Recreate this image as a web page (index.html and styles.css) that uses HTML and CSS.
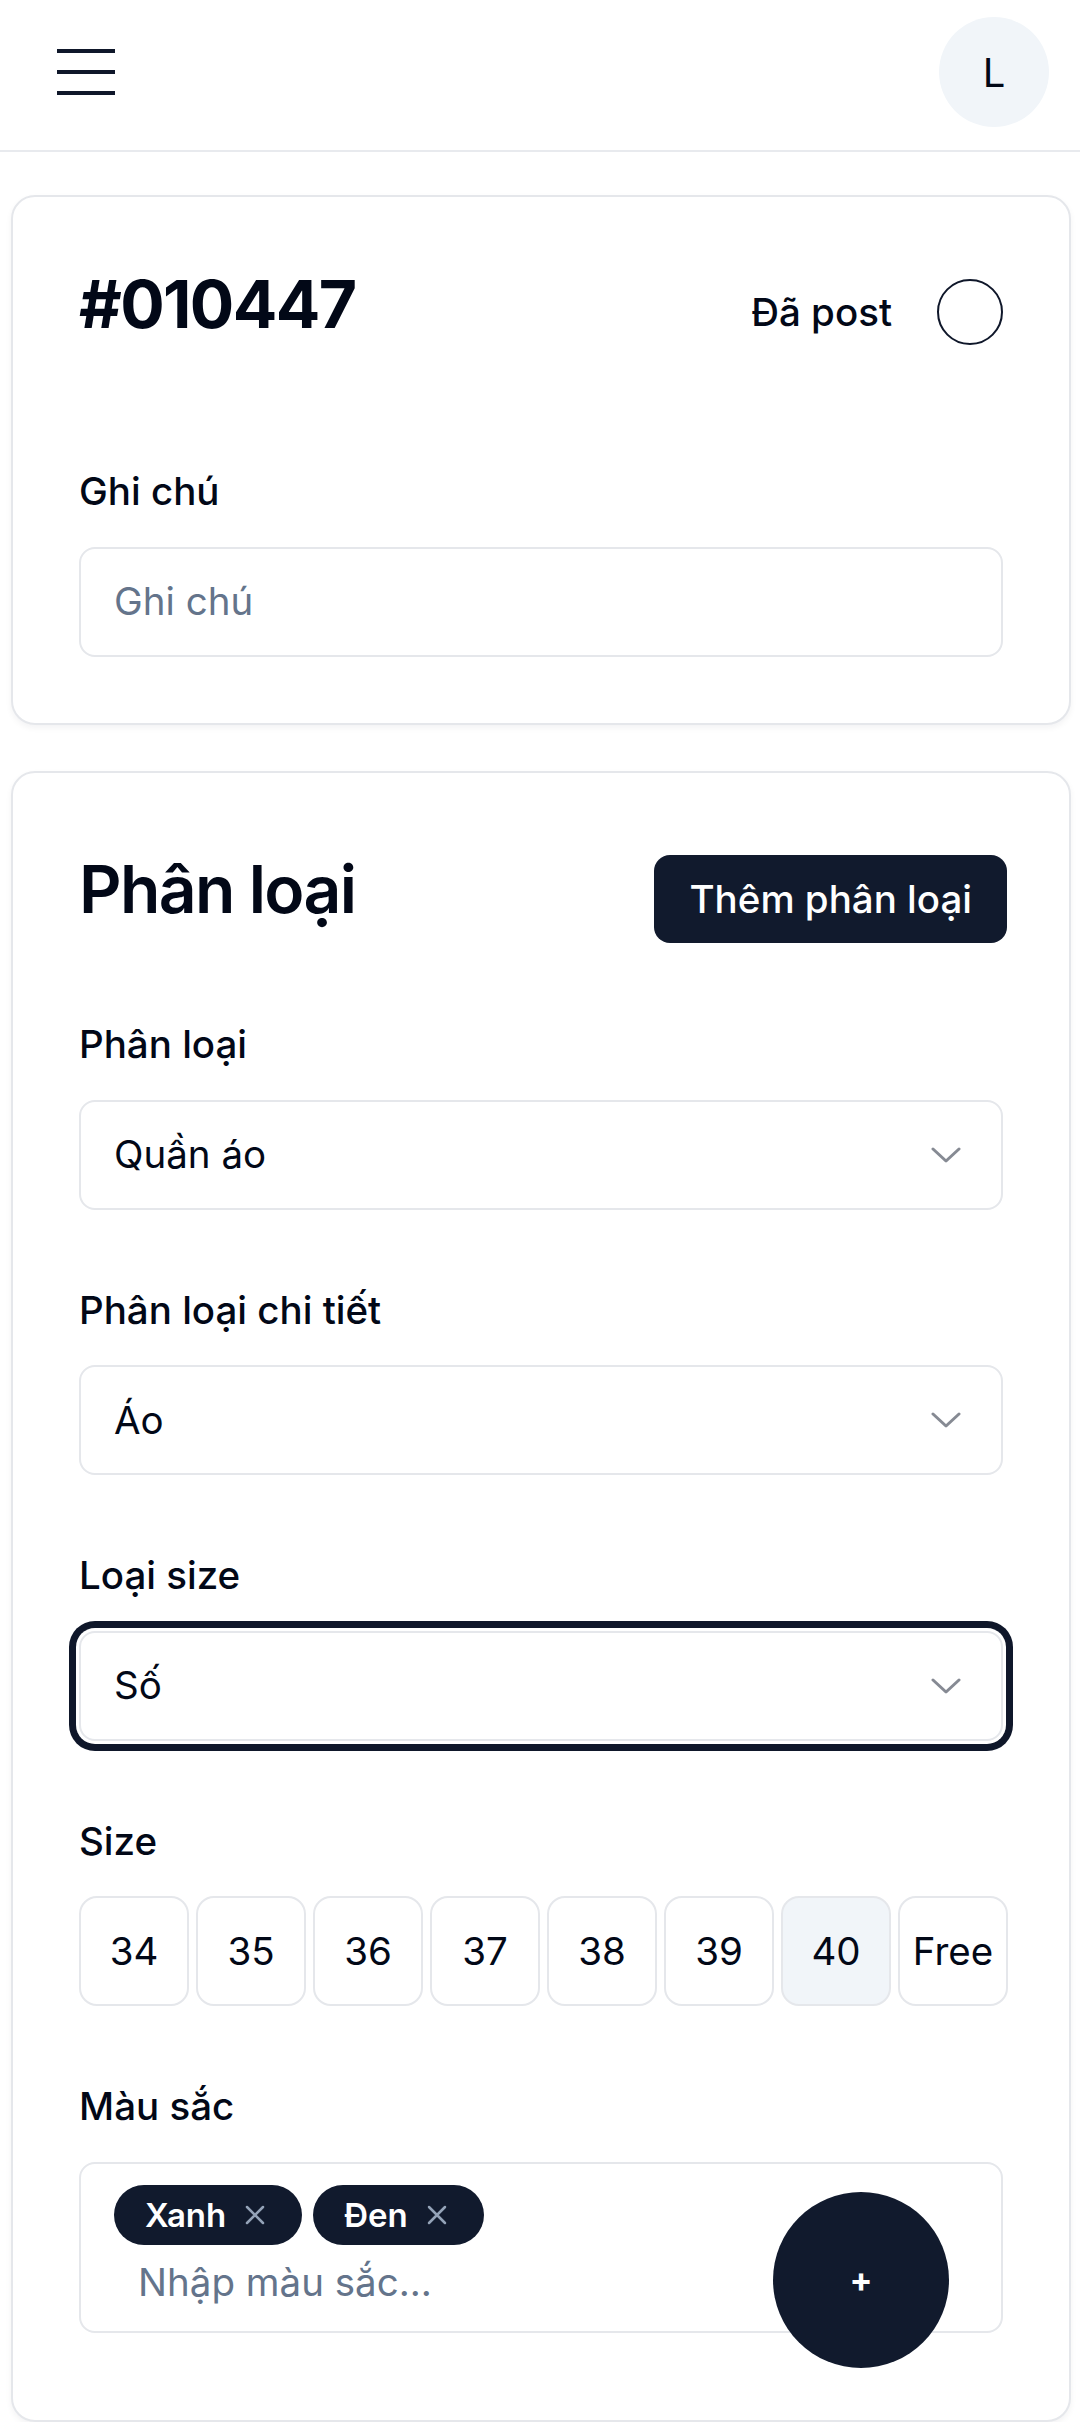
FILE: index.html
```html
<!DOCTYPE html>
<html lang="vi">
<head>
<meta charset="utf-8">
<title>Đơn hàng #010447</title>
<link rel="stylesheet" href="styles.css">
</head>
<body>
<header class="topbar">
  <button class="menu-btn" aria-label="Menu">
    <svg width="58" height="46" viewBox="0 0 58 46"><path d="M0 2H58M0 23H58M0 44H58" stroke="#0f172a" stroke-width="4"/></svg>
  </button>
  <div class="avatar">L</div>
</header>
<main class="page">
  <section class="card">
    <div class="order-head">
      <h1 class="order-id">#010447</h1>
      <div class="posted"><span>Đã post</span><span class="radio"></span></div>
    </div>
    <div class="field field-first">
      <div class="label">Ghi chú</div>
      <div class="input"><span class="placeholder">Ghi chú</span></div>
    </div>
  </section>

  <section class="card card-second">
    <div class="section-head">
      <h2 class="section-title">Phân loại</h2>
      <button class="btn-primary">Thêm phân loại</button>
    </div>

    <div class="field field-top">
      <div class="label">Phân loại</div>
      <div class="input select"><span>Quần áo</span>
        <svg class="chev" width="30" height="16" viewBox="0 0 30 16"><path d="M2 2L15 14L28 2" fill="none" stroke="#0f172a" stroke-width="3" stroke-linecap="round" stroke-linejoin="round"/></svg>
      </div>
    </div>

    <div class="field">
      <div class="label">Phân loại chi tiết</div>
      <div class="input select"><span>Áo</span>
        <svg class="chev" width="30" height="16" viewBox="0 0 30 16"><path d="M2 2L15 14L28 2" fill="none" stroke="#0f172a" stroke-width="3" stroke-linecap="round" stroke-linejoin="round"/></svg>
      </div>
    </div>

    <div class="field">
      <div class="label">Loại size</div>
      <div class="input select focused"><span>Số</span>
        <svg class="chev" width="30" height="16" viewBox="0 0 30 16"><path d="M2 2L15 14L28 2" fill="none" stroke="#0f172a" stroke-width="3" stroke-linecap="round" stroke-linejoin="round"/></svg>
      </div>
    </div>

    <div class="field">
      <div class="label">Size</div>
      <div class="sizes">
        <div class="size">34</div>
        <div class="size">35</div>
        <div class="size">36</div>
        <div class="size">37</div>
        <div class="size">38</div>
        <div class="size">39</div>
        <div class="size active">40</div>
        <div class="size">Free</div>
      </div>
    </div>

    <div class="field">
      <div class="label">Màu sắc</div>
      <div class="tagbox">
        <div class="chips">
          <span class="chip">Xanh<svg width="22" height="22" viewBox="0 0 22 22"><path d="M3 3L19 19M19 3L3 19" stroke="#94a3b8" stroke-width="2.5" stroke-linecap="round"/></svg></span>
          <span class="chip">Đen<svg width="22" height="22" viewBox="0 0 22 22"><path d="M3 3L19 19M19 3L3 19" stroke="#94a3b8" stroke-width="2.5" stroke-linecap="round"/></svg></span>
        </div>
        <div class="tag-placeholder">Nhập màu sắc...</div>
        <button class="fab" aria-label="Thêm">+</button>
      </div>
    </div>
  </section>
</main>
</body>
</html>
```

FILE: styles.css
```css
* { box-sizing: border-box; }

html, body {
  margin: 0;
  padding: 0;
  background: #ffffff;
}

body {
  font-family: Inter, "Noto Sans", "Liberation Sans", sans-serif;
  color: #020817;
  font-size: 38.5px;
}

.topbar {
  height: 152px;
  display: flex;
  align-items: center;
  justify-content: space-between;
  padding: 0 31px 6px 57px;
  border-bottom: 2px solid #e8eaee;
}

.menu-btn {
  border: 0;
  background: none;
  padding: 0;
  width: 58px;
  height: 46px;
  display: block;
}
.menu-btn svg { display: block; }

.avatar {
  width: 110px;
  height: 110px;
  border-radius: 50%;
  background: #f1f5f9;
  display: flex;
  align-items: center;
  justify-content: center;
  font-size: 40px;
  color: #020817;
}

.page {
  padding-top: 43px;
}

.card {
  margin: 0 9px 0 11px;
  background: #fff;
  border: 2px solid #e5e7eb;
  border-radius: 24px;
  padding: 66px;
  box-shadow: 0 3px 6px rgba(15, 23, 42, 0.05);
}

.card-second {
  margin-top: 46px;
  padding-bottom: 87px;
}

.order-head {
  display: flex;
  justify-content: space-between;
  align-items: flex-start;
  margin-top: 8px;
}

.order-id {
  margin: 0;
  font-size: 66px;
  line-height: 66px;
  font-weight: 700;
  letter-spacing: -1.65px;
}

.posted {
  display: flex;
  align-items: center;
  gap: 45px;
  margin-top: 8px;
  font-weight: 500;
  line-height: 55px;
}

.radio {
  width: 66px;
  height: 66px;
  border-radius: 50%;
  border: 2.5px solid #0f172a;
}

.field { margin-top: 73px; }
.field-first { margin-top: 119px; }
.field-top { margin-top: 74.5px; }

.label {
  font-weight: 500;
  line-height: 55px;
  margin-bottom: 27.5px;
}

.input {
  height: 110px;
  border: 2px solid #e5e7eb;
  border-radius: 16px;
  padding: 0 33px;
  display: flex;
  align-items: center;
  background: #fff;
  line-height: 55px;
}

.placeholder { color: #64748b; }

.select {
  justify-content: space-between;
  padding-right: 40px;
}

.chev {
  display: block;
  opacity: 0.5;
}

.focused {
  box-shadow: 0 0 0 3px #fff, 0 0 0 10px #0f172a;
}

.section-head {
  display: flex;
  justify-content: space-between;
  align-items: flex-start;
  margin-top: 16px;
}

.section-title {
  margin: 1px 0 0 0;
  font-size: 66px;
  line-height: 66px;
  font-weight: 600;
  letter-spacing: -1.65px;
}

.btn-primary {
  height: 88px;
  margin-right: -4px;
  padding: 0 35px;
  border: 0;
  border-radius: 16px;
  background: #111a2d;
  color: #fff;
  font-family: inherit;
  font-size: 38.5px;
  font-weight: 500;
}

.sizes {
  display: flex;
  gap: 7px;
}

.size {
  flex: 0 0 110px;
  height: 110px;
  border: 2px solid #e5e7eb;
  border-radius: 18px;
  display: flex;
  align-items: center;
  justify-content: center;
  background: #fff;
}

.size.active { background: #f1f5f9; }

.tagbox {
  position: relative;
  border: 2px solid #e5e7eb;
  border-radius: 16px;
  padding: 21px 33px 20.5px 33px;
}

.chips {
  display: flex;
  gap: 11px;
}

.chip {
  height: 60px;
  display: inline-flex;
  align-items: center;
  gap: 18px;
  padding: 0 36px 0 31px;
  border-radius: 30px;
  background: #111a2d;
  color: #fff;
  font-size: 33px;
  font-weight: 600;
}
.chip svg { display: block; }

.tag-placeholder {
  margin-top: 10.5px;
  padding-left: 24px;
  line-height: 55px;
  color: #64748b;
}

.fab {
  position: absolute;
  left: 692px;
  top: 28px;
  width: 176px;
  height: 176px;
  border-radius: 50%;
  border: 0;
  background: #111a2d;
  color: #fff;
  font-family: inherit;
  font-size: 34px;
  font-weight: 700;
  display: flex;
  align-items: center;
  justify-content: center;
  padding: 0;
}
```
